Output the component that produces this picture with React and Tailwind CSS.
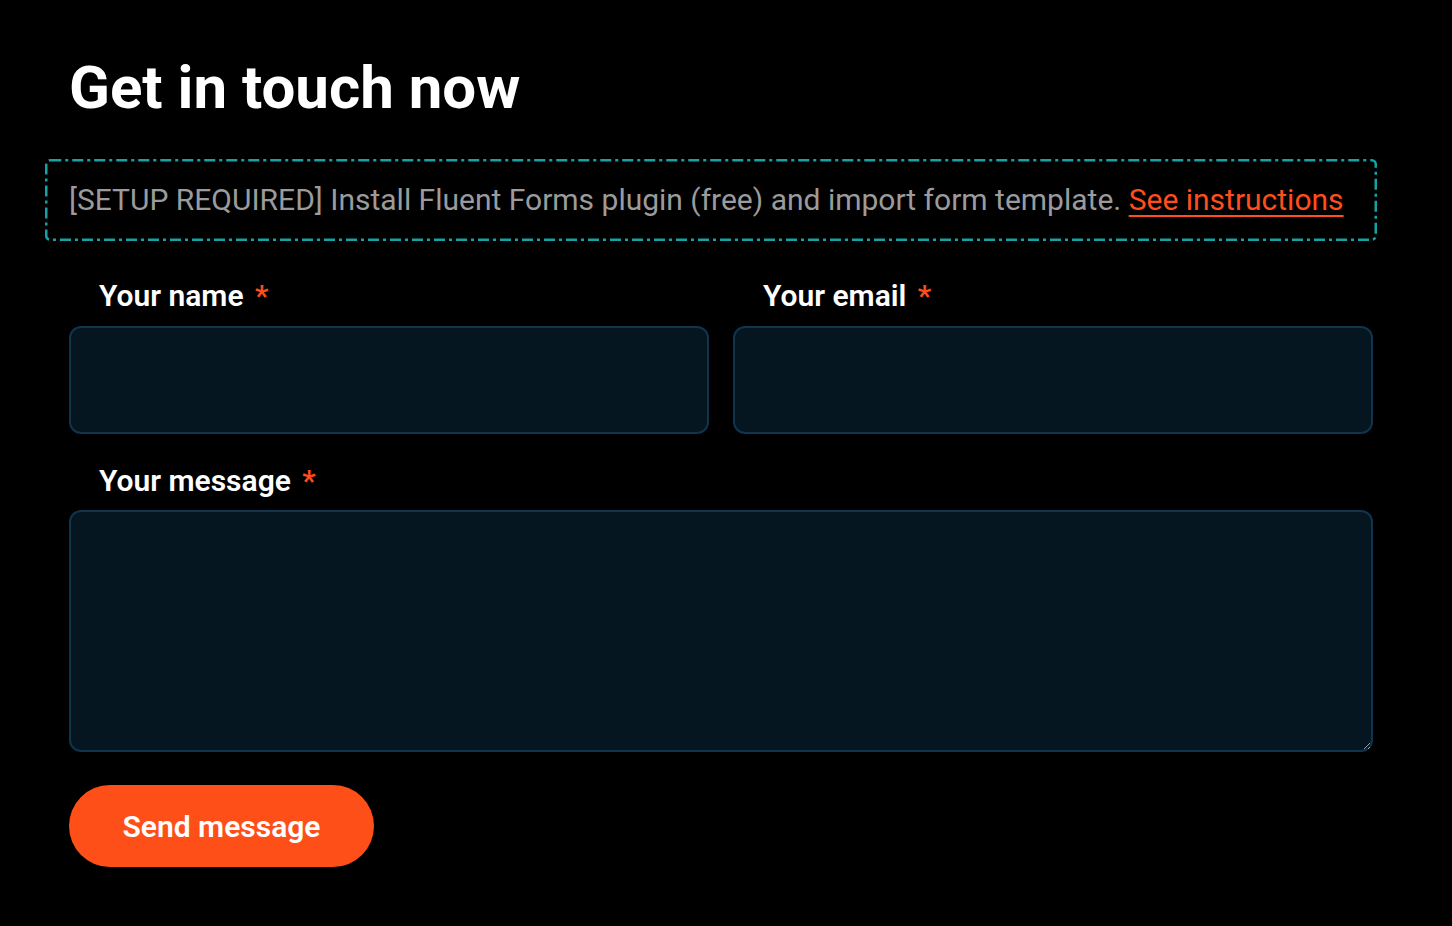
export default function App() {
  const font = { fontFamily: "Roboto, 'Liberation Sans', sans-serif" };
  return (
    <div className="min-h-[926px] w-full bg-black" style={font}>
      <div className="w-[1304px] ml-[69px] pt-[52px]">
        <h1 className="text-[60px] leading-[72px] font-bold text-white">Get in touch now</h1>
        <div className="relative -ml-[24px] w-[1332px] h-[82px] mt-[35px] flex items-center pl-[24px]">
          <svg className="absolute inset-0 pointer-events-none" width="1332" height="82">
            <rect x="1.25" y="1.25" width="1329.5" height="79.5" rx="4" ry="4" fill="none" stroke="#14a2a7" strokeWidth="2.5" strokeDasharray="11 4 3 4" />
          </svg>
          <p className="text-[30px] text-[#9b9b9b] leading-[36px]">
            [SETUP REQUIRED] Install Fluent Forms plugin (free) and import form template.{" "}
            <a href="#" className="text-[#ff4d1c] underline underline-offset-[5px] decoration-2">See instructions</a>
          </p>
        </div>
        <div className="grid grid-cols-2 gap-[24px] mt-[37px]">
          {["Your name", "Your email"].map((l) => (
            <div key={l}>
              <label className="block pl-[30px] text-[30px] leading-[36px] font-semibold text-white">
                {l} <span className="text-[#ff4d1c] ml-[4px]">*</span>
              </label>
              <input className="mt-[12px] block w-full h-[108px] rounded-[12px] border-2 border-[#10344d] bg-[#061620] outline-none" />
            </div>
          ))}
        </div>
        <div className="mt-[29px]">
          <label className="block pl-[30px] text-[30px] leading-[36px] font-semibold text-white">
            Your message <span className="text-[#ff4d1c] ml-[4px]">*</span>
          </label>
          <textarea className="mt-[11px] block w-full h-[242px] rounded-[12px] border-2 border-[#10344d] bg-[#061620] outline-none" />
        </div>
        <button className="mt-[33px] h-[82px] w-[305px] rounded-full bg-[#ff4f19] text-white text-[30px] font-semibold">Send message</button>
      </div>
    </div>
  );
}
